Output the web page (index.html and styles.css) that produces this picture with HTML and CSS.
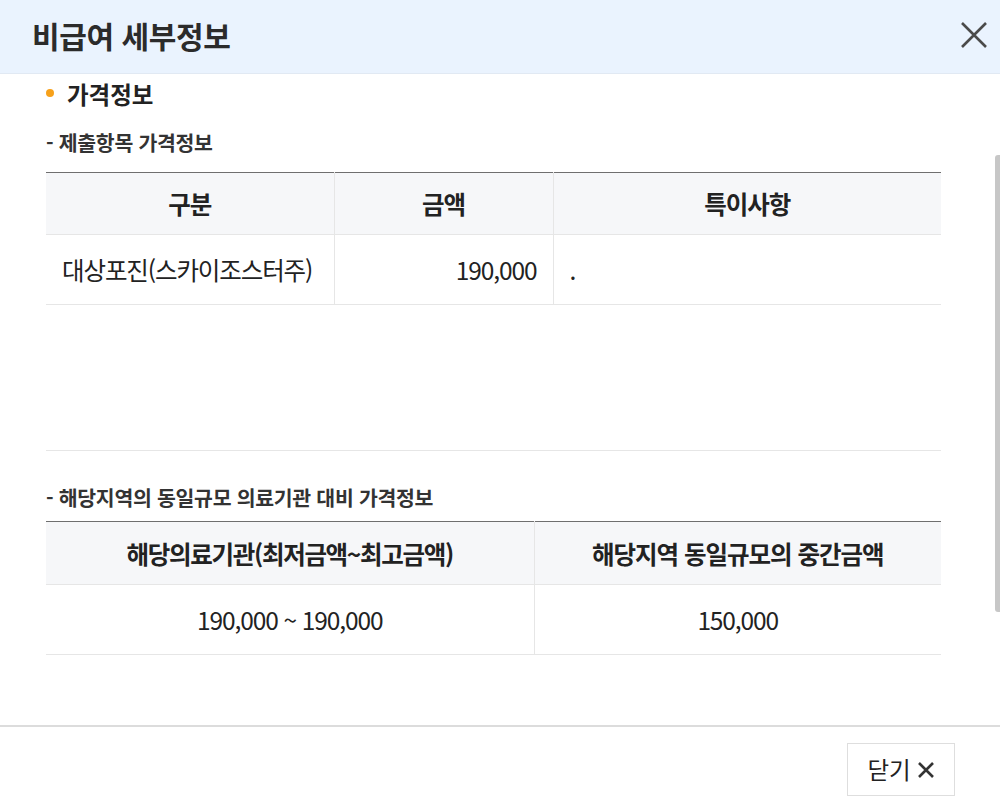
FILE: index.html
```html
<!DOCTYPE html>
<html lang="ko">
<head>
<meta charset="utf-8">
<title>비급여 세부정보</title>
<link rel="stylesheet" href="styles.css">
</head>
<body>
<div class="modal">
  <header class="modal-head">
    <h1 class="modal-title">비급여 세부정보</h1>
    <button class="icon-close" aria-label="닫기">
      <svg width="28" height="28" viewBox="0 0 28 28"><path d="M2 2 L26 26 M26 2 L2 26" stroke="#4a4a4a" stroke-width="2.6" fill="none"/></svg>
    </button>
  </header>
  <main class="modal-body">
    <h2 class="sec-title"><span class="dot"></span>가격정보</h2>
    <h3 class="sub-title first">- 제출항목 가격정보</h3>
    <div class="table-wrap tall">
      <table class="grid t1">
        <colgroup><col class="c1"><col class="c2"><col class="c3"></colgroup>
        <thead>
          <tr><th>구분</th><th>금액</th><th>특이사항</th></tr>
        </thead>
        <tbody>
          <tr><td class="left">대상포진(스카이조스터주)</td><td class="right">190,000</td><td class="left note">.</td></tr>
        </tbody>
      </table>
    </div>
    <h3 class="sub-title second">- 해당지역의 동일규모 의료기관 대비 가격정보</h3>
    <div class="table-wrap">
      <table class="grid t2">
        <colgroup><col class="d1"><col class="d2"></colgroup>
        <thead>
          <tr><th class="narrow">해당의료기관(최저금액~최고금액)</th><th>해당지역 동일규모의 중간금액</th></tr>
        </thead>
        <tbody>
          <tr><td>190,000 ~ 190,000</td><td>150,000</td></tr>
        </tbody>
      </table>
    </div>
    <div class="scroll-thumb"></div>
  </main>
  <footer class="modal-foot">
    <button class="btn-close">닫기
      <svg width="18" height="18" viewBox="0 0 18 18"><path d="M2 2 L16 16 M16 2 L2 16" stroke="#333" stroke-width="2.6" fill="none"/></svg>
    </button>
  </footer>
</div>
</body>
</html>
```

FILE: styles.css
```css
* { box-sizing: border-box; }
html, body { margin: 0; padding: 0; }
body {
  font-family: "Noto Sans CJK KR", "Noto Sans", sans-serif;
  color: #222;
  background: #fff;
}
.modal {
  width: 1000px;
  height: 805px;
  display: flex;
  flex-direction: column;
  overflow: hidden;
}
.modal-head {
  height: 74px;
  flex: none;
  background: #eaf3fe;
  border-bottom: 1px solid #e1e9f3;
  display: flex;
  align-items: center;
  justify-content: space-between;
  padding: 0 12px 0 32px;
}
.modal-title {
  margin: 0 0 3px 0;
  font-size: 30px;
  font-weight: 700;
  color: #2b2b2b;
  letter-spacing: -0.4px;
  line-height: 38px;
}
.icon-close {
  border: 0;
  background: none;
  padding: 0;
  width: 28px;
  height: 28px;
  margin-bottom: 3px;
  display: flex;
}
.modal-body {
  position: relative;
  flex: 1;
  padding: 0 59px 0 46px;
}
.sec-title {
  margin: 5px 0 0 0;
  font-size: 23.5px;
  line-height: 30px;
  font-weight: 700;
  color: #222;
  display: flex;
  align-items: center;
}
.dot {
  width: 8px;
  height: 8px;
  border-radius: 50%;
  background: #f7a11a;
  margin: 0 13px 2px 0;
}
.sub-title {
  margin: 0;
  font-size: 20.5px;
  line-height: 26px;
  font-weight: 700;
  color: #333;
  letter-spacing: -0.3px;
}
.sub-title.first { margin-top: 20px; margin-bottom: 17px; }
.sub-title.second { margin-top: 33px; margin-bottom: 11px; }
.table-wrap.tall {
  height: 279px;
  border-bottom: 1px solid #e6e6e6;
}
.grid {
  width: 100%;
  border-collapse: collapse;
  table-layout: fixed;
  border-top: 1px solid #6f6f6f;
}
.grid th {
  height: 63px;
  background: #f6f7f9;
  font-size: 24.5px;
  font-weight: 700;
  letter-spacing: -1px;
  color: #222;
  border-bottom: 1px solid #e6e6e6;
  border-left: 1px solid #e6e6e6;
  padding: 0 16px;
  text-align: center;
}
.t1 th { height: 62px; }
.grid th.narrow { letter-spacing: -1.3px; }
.grid td {
  height: 70px;
  color: #222;
  font-size: 24.5px;
  letter-spacing: -1.1px;
  border-bottom: 1px solid #e6e6e6;
  border-left: 1px solid #e6e6e6;
  padding: 0 16px;
  text-align: center;
}
.grid th:first-child, .grid td:first-child { border-left: 0; }
.grid td.left { text-align: left; }
.grid td.right { text-align: right; }
.grid td.note { padding-left: 16px; }
.c1 { width: 288px; }
.c2 { width: 219px; }
.d1 { width: 488px; }
.scroll-thumb {
  position: absolute;
  right: 0;
  top: 81px;
  width: 5px;
  height: 457px;
  background: #c7c7c7;
  border-radius: 3px 0 0 3px;
}
.modal-foot {
  height: 80px;
  flex: none;
  border-top: 2px solid #dcdcdc;
  display: flex;
  justify-content: flex-end;
  align-items: flex-start;
  padding: 16px 45px 0 0;
}
.btn-close {
  width: 108px;
  height: 53px;
  background: #fff;
  border: 1px solid #dedede;
  font-family: "Noto Sans CJK KR", "Noto Sans", sans-serif;
  font-size: 23.5px;
  color: #222;
  display: flex;
  align-items: center;
  justify-content: center;
  gap: 6px;
  padding: 0 0 2px 0;
}
.btn-close svg { margin-top: 3px; }
```
